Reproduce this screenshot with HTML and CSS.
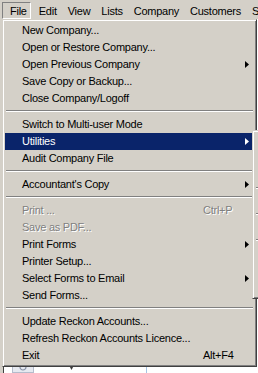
FILE: index.html
```html
<!DOCTYPE html>
<html lang="en">
<head>
    <meta charset="UTF-8">
    <title>Reckon Accounts - File menu</title>
    <link rel="stylesheet" href="styles.css">
</head>
<body>
    <div class="menubar">
        <span class="menubar-item active">File</span>
        <span class="menubar-item">Edit</span>
        <span class="menubar-item">View</span>
        <span class="menubar-item">Lists</span>
        <span class="menubar-item">Company</span>
        <span class="menubar-item">Customers</span>
        <span class="menubar-item">Suppliers</span>
    </div>

    <!-- window content behind the open menu -->
    <div class="workspace">
        <div class="tile">
            <svg width="8" height="8" viewBox="0 0 8 8">
                <circle cx="4" cy="4" r="3" fill="none" stroke="#8a94a8" stroke-width="1.2"/>
            </svg>
        </div>
        <div class="chevron"></div>
        <div class="divider"></div>
    </div>

    <div class="menu file-menu">
        <div class="menu-item"><span class="label">New Company...</span></div>
        <div class="menu-item"><span class="label">Open or Restore Company...</span></div>
        <div class="menu-item has-sub"><span class="label">Open Previous Company</span></div>
        <div class="menu-item"><span class="label">Save Copy or Backup...</span></div>
        <div class="menu-item"><span class="label">Close Company/Logoff</span></div>
        <div class="separator"></div>
        <div class="menu-item"><span class="label">Switch to Multi-user Mode</span></div>
        <div class="menu-item has-sub selected"><span class="label">Utilities</span></div>
        <div class="menu-item"><span class="label">Audit Company File</span></div>
        <div class="separator"></div>
        <div class="menu-item has-sub"><span class="label">Accountant's Copy</span></div>
        <div class="separator"></div>
        <div class="menu-item disabled"><span class="label">Print ...</span><span class="shortcut">Ctrl+P</span></div>
        <div class="menu-item disabled"><span class="label">Save as PDF...</span></div>
        <div class="menu-item has-sub"><span class="label">Print Forms</span></div>
        <div class="menu-item"><span class="label">Printer Setup...</span></div>
        <div class="menu-item has-sub"><span class="label">Select Forms to Email</span></div>
        <div class="menu-item"><span class="label">Send Forms...</span></div>
        <div class="separator"></div>
        <div class="menu-item"><span class="label">Update Reckon Accounts...</span></div>
        <div class="menu-item"><span class="label">Refresh Reckon Accounts Licence...</span></div>
        <div class="menu-item"><span class="label">Exit</span><span class="shortcut">Alt+F4</span></div>
    </div>

    <!-- Utilities submenu, mostly off screen -->
    <div class="menu submenu">
        <div class="menu-item"></div>
        <div class="menu-item"></div>
        <div class="menu-item"></div>
        <div class="separator"></div>
        <div class="menu-item"></div>
        <div class="separator"></div>
        <div class="menu-item"></div>
        <div class="separator"></div>
        <div class="menu-item"></div>
        <div class="menu-item"></div>
        <div class="menu-item"></div>
    </div>
</body>
</html>
```

FILE: styles.css
```css
* {
    margin: 0;
    padding: 0;
    box-sizing: border-box;
}

body {
    font-family: "Liberation Sans", Arial, sans-serif;
    font-size: 11px;
    letter-spacing: -0.25px;
    color: #000;
    background: #d4d0c8;
    width: 258px;
    height: 373px;
    overflow: hidden;
    position: relative;
}

/* menu bar */
.menubar {
    height: 19px;
    padding: 2px 0 0 2px;
    display: flex;
    white-space: nowrap;
    overflow: hidden;
}

.menubar-item {
    height: 17px;
    padding: 1px 2px 0 7px;
    line-height: 14px;
    border: 1px solid transparent;
}

.menubar-item.active {
    padding-right: 3px;
    border-color: #808080 #fff #fff #808080;
}

/* window content */
.workspace {
    height: 354px;
    margin-left: 3px;
    border-left: 1px solid #404040;
    background: #fff;
    display: flex;
    align-items: flex-end;
}

.tile {
    width: 22px;
    height: 20px;
    margin-left: 8px;
    background: #e6e9f0;
    border: 1px solid #b4bccc;
    display: flex;
    align-items: flex-end;
    justify-content: center;
    padding-bottom: 1px;
}

.chevron {
    width: 13px;
    height: 12px;
    margin-left: 31px;
    margin-bottom: 3px;
    background: #3c3c3c;
    clip-path: polygon(0 0, 100% 0, 50% 100%);
}

.divider {
    width: 1px;
    height: 10px;
    margin-left: 68px;
    background: #a6c4e4;
}

/* popup menus */
.menu {
    position: absolute;
    background: #d4d0c8;
    border: 1px solid;
    border-color: #d4d0c8 #404040 #404040 #d4d0c8;
    box-shadow: inset 1px 1px #fff, inset -1px -1px #808080;
    padding: 2px;
}

.file-menu {
    left: 2px;
    top: 19px;
    width: 255px;
}

.submenu {
    left: 252px;
    top: 130px;
    width: 160px;
    height: 169px;
}

.menu-item {
    height: 17px;
    line-height: 17px;
    padding: 0 5px 0 17px;
    display: flex;
    align-items: center;
    white-space: nowrap;
}

.menu-item .label {
    width: 181px;
}

.menu-item.has-sub::after {
    content: "";
    width: 4px;
    height: 7px;
    margin-left: auto;
    background: #000;
    clip-path: polygon(0 0, 100% 50%, 0 100%);
}

.menu-item.selected {
    background: #0a246a;
    color: #fff;
}

.menu-item.selected::after {
    background: #fff;
}

.menu-item.disabled {
    color: #808080;
    text-shadow: 1px 1px 0 #fff;
}

.separator {
    height: 2px;
    margin: 3px 1px 4px;
    border-top: 1px solid #808080;
    border-bottom: 1px solid #fff;
}
```
